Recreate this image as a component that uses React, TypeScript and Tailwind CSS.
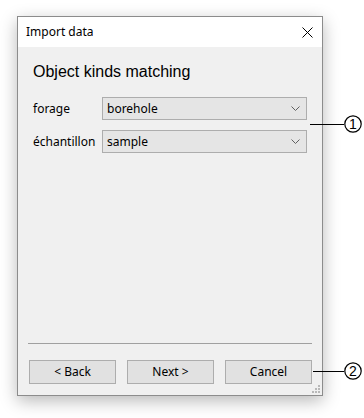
import React from "react";

const font = { fontFamily: '"Noto Sans", "Open Sans", Arial, sans-serif' };

function Chevron() {
  return (
    <svg width="9" height="5" viewBox="0 0 9 5" className="shrink-0">
      <path d="M0.5 0.5 L4.5 4.5 L8.5 0.5" fill="none" stroke="#606060" strokeWidth="1" />
    </svg>
  );
}

function Combo({ value }: { value: string }) {
  return (
    <div className="flex h-[23px] w-[205px] items-center justify-between border border-[#adadad] bg-[#e5e5e5] pl-[4px] pr-[6px] text-[12px] text-black">
      <span>{value}</span>
      <Chevron />
    </div>
  );
}

function Btn({ label }: { label: string }) {
  return (
    <div className="flex h-[24px] w-[87px] items-center justify-center border border-[#adadad] bg-[#e1e1e1] text-[12px] text-black">
      {label}
    </div>
  );
}

function Callout({ n, top, left, len }: { n: string; top: number; left: number; len: number }) {
  return (
    <div className="absolute flex items-center" style={{ top, left }}>
      <div className="h-px bg-black" style={{ width: len }} />
      <svg width="18" height="18" viewBox="0 0 18 18">
        <circle cx="9" cy="9" r="8.2" fill="none" stroke="black" strokeWidth="1.2" />
        <text x="9" y="14" textAnchor="middle" fontSize="14" fontFamily="Arial, 'Liberation Sans', sans-serif" fill="black">
          {n}
        </text>
      </svg>
    </div>
  );
}

export default function App() {
  return (
    <div className="relative h-[418px] w-[364px] overflow-hidden bg-white pl-[17px] pt-[16px]" style={font}>
      <div className="flex h-[380px] w-[306px] flex-col border border-[#8c8c8c] bg-[#f0f0f0] shadow-[0_5px_16px_rgba(0,0,0,0.28)]">
        <div className="flex h-[30px] items-center justify-between bg-white pl-[8px] pr-[9px]">
          <span className="text-[12px] text-black">Import data</span>
          <svg width="11" height="11" viewBox="0 0 11 11">
            <path d="M0.5 0.5 L10.5 10.5 M10.5 0.5 L0.5 10.5" stroke="black" strokeWidth="1" />
          </svg>
        </div>
        <div className="flex flex-1 flex-col px-[15px] pt-[14px]">
          <div className="text-[16px] leading-[22px] text-black" style={{ fontFamily: '"Liberation Sans", Arial, sans-serif' }}>
            Object kinds matching
          </div>
          <div className="mt-[14px] flex flex-col gap-[10px]">
            <div className="flex items-center">
              <span className="w-[69px] text-[12px] text-black">forage</span>
              <Combo value="borehole" />
            </div>
            <div className="flex items-center">
              <span className="w-[69px] text-[12px] text-black">échantillon</span>
              <Combo value="sample" />
            </div>
          </div>
        </div>
        <div className="mx-[10px] h-px bg-[#a0a0a0]" />
        <div className="flex gap-[11px] pl-[11px] pb-[11px] pt-[16px]">
          <Btn label="< Back" />
          <Btn label="Next >" />
          <Btn label="Cancel" />
        </div>
        <div className="relative">
          <div className="absolute bottom-[2px] right-[2px] grid grid-cols-3 gap-px">
            <div className="h-[2px] w-[2px]" />
            <div className="h-[2px] w-[2px]" />
            <div className="h-[2px] w-[2px] bg-[#b8b8b8]" />
            <div className="h-[2px] w-[2px]" />
            <div className="h-[2px] w-[2px] bg-[#b8b8b8]" />
            <div className="h-[2px] w-[2px] bg-[#b8b8b8]" />
            <div className="h-[2px] w-[2px] bg-[#b8b8b8]" />
            <div className="h-[2px] w-[2px] bg-[#b8b8b8]" />
            <div className="h-[2px] w-[2px] bg-[#b8b8b8]" />
          </div>
        </div>
      </div>
      <Callout n="1" top={115} left={310} len={34} />
      <Callout n="2" top={362} left={313} len={31} />
    </div>
  );
}
